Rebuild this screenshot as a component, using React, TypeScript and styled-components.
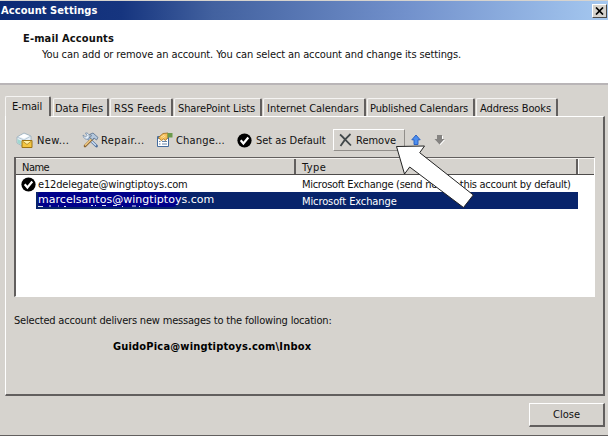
import React from 'react';
import styled, { createGlobalStyle, css } from 'styled-components';

const Global = createGlobalStyle`
  body { margin: 0; background: #fff; overflow: hidden; }
  * { box-sizing: border-box; }
`;

const face = '#d6d3ce';
const dark = '#625f5e';
const navy = '#08246b';

const Dialog = styled.div`
  position: relative;
  display: flex;
  flex-direction: column;
  width: 608px;
  height: 436px;
  padding-top: 1px;
  background: ${face};
  color: #111;
  font: 11px/13px 'DejaVu Sans Condensed', 'DejaVu Sans', sans-serif;
  white-space: nowrap;
`;

const Label = styled.span<{ $track?: number; $bold?: boolean }>`
  display: block;
  letter-spacing: ${(p) => p.$track ?? 0}px;
  font-weight: ${(p) => (p.$bold ? 700 : 400)};
`;

const TitleBar = styled.header`
  display: flex;
  flex: none;
  justify-content: space-between;
  height: 19px;
  padding: 3px 1px 0;
  color: #fff;
  background: linear-gradient(90deg, #0c2a75 0, #16357f 20%, #42619f 35%, #7291cc 67%, #a5c8f0 100%);
`;

const CloseBox = styled.button`
  display: grid;
  place-items: center;
  width: 15px;
  height: 14px;
  padding: 0;
  border: 1px solid;
  border-color: #fff #4c4a48 #4c4a48 #fff;
  background: ${face};
`;

const Banner = styled.section`
  flex: none;
  height: 65px;
  padding: 12px 23px 0;
  background: #fff;
  border-bottom: 2px solid #b9b5b7;
`;

const Description = styled.div`
  padding: 3px 0 0 19px;
`;

const TabStrip = styled.nav`
  display: flex;
  flex: none;
  align-items: flex-end;
  height: 31px;
  padding-left: 5px;
`;

const Tab = styled.div<{ $width: number; $pad: number; $active?: boolean }>`
  width: ${(p) => p.$width}px;
  height: 18px;
  padding: 3px 0 0 ${(p) => p.$pad}px;
  border-top: 1px solid #f5f4f2;
  border-left: 1px solid #f5f4f2;
  border-right: 2px solid ${dark};
  border-radius: 2px 2px 0 0;
  margin-right: 1px;
  ${(p) =>
    p.$active &&
    css`
      height: 20px;
      margin: 0 2px 0 0;
    `}
`;

const Panel = styled.main`
  flex: none;
  width: 600px;
  height: 280px;
  margin-left: 5px;
  padding: 12px 0 0 8px;
  border: 1px solid #fff;
  border-right: 2px solid ${dark};
  border-bottom: 2px solid ${dark};
`;

/* The top edge of the panel is open below the active tab. */
const PanelEdge = styled.div`
  width: 45px;
  height: 1px;
  margin: -13px 0 12px -8px;
  background: ${face};
`;

const Toolbar = styled.div`
  display: grid;
  grid-template-columns: 66px 74px 81px 98px 76px 23px 20px;
  height: 22px;
`;

const Tool = styled.div<{ $gap: number; $raised?: boolean }>`
  display: flex;
  align-items: center;
  gap: ${(p) => p.$gap}px;
  padding-left: 2px;
  ${(p) =>
    p.$raised &&
    css`
      width: 72px;
      padding-left: 5px;
      border: 1px solid;
      border-color: #fff #918e8a #918e8a #fff;
    `}
`;

const Glyph = styled.svg`
  display: block;
  flex: none;
`;

const List = styled.div`
  width: 581px;
  height: 140px;
  margin-top: 6px;
  background: #fff;
  border: solid;
  border-width: 1px 1px 1px 2px;
  border-color: ${dark} #fff #fff ${dark};
`;

const Columns = styled.div`
  display: grid;
  grid-template-columns: 280px 282px 1fr;
  height: 17px;
  background: ${face};
  border-top: 1px solid #f4f2ef;
  border-bottom: 1px solid #4e4b4a;
`;

const Column = styled.div`
  padding: 2px 0 0 6px;
  border-right: 2px solid ${dark};
  &:last-child { border-right: 0; border-left: 1px solid #fff; }
`;

const Row = styled.div<{ $selected?: boolean }>`
  display: grid;
  grid-template-columns: 20px 1fr 276px;
  width: 562px;
  height: 17px;
  ${(p) => p.$selected && css`color: #fff;`}
`;

const Mark = styled.div`
  padding: 2px 0 0 5px;
`;

const Cell = styled.div<{ $fill?: boolean; $indent?: number }>`
  display: flex;
  align-items: flex-start;
  padding: 3px 0 0 ${(p) => p.$indent ?? 0}px;
  background: ${(p) => (p.$fill ? navy : 'transparent')};
`;

const Address = styled.div`
  position: relative;
  width: 142px;
  height: 15px;
  margin-top: -3px;
  border-radius: 3px 3px 8px 5px;
  background: #00008b;
  font-family: 'DejaVu Sans', sans-serif;
  line-height: 15px;
`;

const Specks = styled.svg`
  position: absolute;
  left: 0;
  top: 13px;
`;

const Details = styled.section`
  padding-top: 17px;
`;

const Location = styled.div`
  padding: 13px 0 0 99px;
  color: #000;
`;

const Footer = styled.footer`
  display: flex;
  flex: 1;
  justify-content: flex-end;
  align-items: flex-start;
  padding: 7px 3px 0 0;
  border-bottom: 1px solid ${dark};
`;

const CloseButton = styled.button`
  width: 76px;
  height: 24px;
  padding: 0;
  border: solid;
  border-width: 1px 2px 2px 1px;
  border-color: #fff ${dark} ${dark} #fff;
  background: ${face};
  color: inherit;
  font: inherit;
  text-align: center;
`;

const Pointer = styled.svg`
  position: absolute;
  left: 390px;
  top: 140px;
`;

const CheckIcon = () => (
  <Glyph width="15" height="15" viewBox="0 0 15 15">
    <circle cx="7.5" cy="7.5" r="7.1" fill="#000" />
    <path d="M3.7 7.2l2.7 3.3L11.3 4.5" fill="none" stroke="#fff" strokeWidth="2.2" />
  </Glyph>
);

const NewIcon = () => (
  <Glyph width="17" height="17" viewBox="0 0 17 17">
    <path d="M1 5L8 1l7 3v6l-7 5-7-4z" fill="#e6eff6" stroke="#9aadba" strokeWidth=".8" />
    <path d="M1 5l7 3 7-4M8 8v7" fill="none" stroke="#a9bdca" strokeWidth=".8" />
    <path d="M3 4.500L8 2l5 2-5 2.500z" fill="#fff" />
    <path d="M1.500 7l4 2v4l-4-2z" fill="#9fd7d0" />
    <path d="M6 8.500h10v7H6z" fill="#f3c642" stroke="#9c7312" />
    <path d="M6.500 9l4.500 3.500L15.500 9" fill="#fff0a4" stroke="#aa811f" strokeWidth=".8" />
  </Glyph>
);

const RepairIcon = () => (
  <Glyph width="17" height="16" viewBox="0 0 17 16">
    <path d="M6 6l8.500 8" stroke="#4f6f9c" strokeWidth="2.800" strokeLinecap="round" />
    <path d="M6 6l8 7.500" stroke="#cfe1f5" strokeWidth="1.500" />
    <path d="M1 3l2.500 2L5 3.500 3.500 1C6 .5 8 3 7 6 5 8.500 1.500 7 1 3z" fill="#e6f0fa" stroke="#7089a6" strokeWidth=".8" />
    <path d="M10.500 6.500L3 14" stroke="#8a6432" strokeWidth="2.600" strokeLinecap="round" />
    <path d="M10 6.500L3 13.500" stroke="#f4cd84" strokeWidth="1.400" />
    <path d="M7.500 2.500L11 1l5 4.500-1.500 2.500-2.500-2-1.500 2L8 5.500l1.500-2z" fill="#b4c7dc" stroke="#566e8e" strokeWidth=".8" />
  </Glyph>
);

const ChangeIcon = () => (
  <Glyph width="17" height="16" viewBox="0 0 17 16">
    <path d="M1.500 4.500h11v10h-11z" fill="#fff" stroke="#446c9f" />
    <path d="M2 5h10v2H2z" fill="#6590c6" />
    <path d="M3 9.500h1.500M6 9.500h5M3 12h1.500M6 12h5" stroke="#6685aa" />
    <path d="M2.500 5.500l4.500-4L12 1v4.500L9.500 8.500 7.500 7 5.500 8.500 3.500 7z" fill="#f4bd57" stroke="#9d681d" strokeWidth=".8" />
    <path d="M5 5l3.500-2M6.500 6l3-2" stroke="#ffe3a0" />
    <path d="M11.500 1h5v4.500h-5z" fill="#6c9a4c" />
  </Glyph>
);

const CrossIcon = () => (
  <Glyph width="13" height="14" viewBox="0 0 13 14">
    <path d="M1 1.500C4 4 8 8.500 12 12.500M11.500 1C8 4 4.500 8 1.500 13" fill="none" stroke="#42494b" strokeWidth="1.700" />
  </Glyph>
);

const ArrowIcon = ({ down }: { down?: boolean }) => (
  <Glyph width="11" height="12" viewBox="0 0 11 12">
    {down ? (
      <>
        <path d="M4 2h5v4h2L6.500 11 2 6.500h2z" fill="#fff" />
        <path d="M3 1h5v4h2.500L5.500 10.500.5 5H3z" fill="#858381" />
      </>
    ) : (
      <path d="M5 1l4.200 4.800H7v4.700H3V5.800H.8z" fill="#4c8eef" stroke="#245bc0" strokeWidth=".9" />
    )}
  </Glyph>
);

const tabs = [
  { name: 'E-mail', width: 46, pad: 6, track: -0.17, active: true },
  { name: 'Data Files', width: 56, pad: 1, track: -0.04 },
  { name: 'RSS Feeds', width: 63, pad: 3, track: 0.1 },
  { name: 'SharePoint Lists', width: 88, pad: 3, track: -0.1 },
  { name: 'Internet Calendars', width: 103, pad: 3, track: -0.03 },
  { name: 'Published Calendars', width: 108, pad: 2, track: -0.12 },
  { name: 'Address Books', width: 82, pad: 3, track: -0.1 },
];

export default function App() {
  return (
    <>
      <Global />
      <Dialog>
        <TitleBar>
          <Label $bold $track={0.08}>Account Settings</Label>
          <CloseBox aria-label="Close window">
            <Glyph width="9" height="8" viewBox="0 0 9 8">
              <path d="M1 .5l7 7M8 .5l-7 7" stroke="#000" strokeWidth="1.700" />
            </Glyph>
          </CloseBox>
        </TitleBar>
        <Banner>
          <Label $bold $track={0.13}>E-mail Accounts</Label>
          <Description>
            <Label $track={-0.11}>
              You can add or remove an account. You can select an account and change its settings.
            </Label>
          </Description>
        </Banner>
        <TabStrip>
          {tabs.map((t) => (
            <Tab key={t.name} $width={t.width} $pad={t.pad} $active={t.active}>
              <Label $track={t.track}>{t.name}</Label>
            </Tab>
          ))}
        </TabStrip>
        <Panel>
          <PanelEdge />
          <Toolbar>
            <Tool $gap={4}><NewIcon /><Label $track={0.4}>New...</Label></Tool>
            <Tool $gap={2}><RepairIcon /><Label $track={0.4}>Repair...</Label></Tool>
            <Tool $gap={3}><ChangeIcon /><Label $track={0.17}>Change...</Label></Tool>
            <Tool $gap={4}><CheckIcon /><Label $track={-0.03}>Set as Default</Label></Tool>
            <Tool $gap={4} $raised><CrossIcon /><Label>Remove</Label></Tool>
            <Tool $gap={0}><ArrowIcon /></Tool>
            <Tool $gap={0}><ArrowIcon down /></Tool>
          </Toolbar>
          <List>
            <Columns>
              <Column><Label $track={-0.5}>Name</Label></Column>
              <Column><Label $track={0.4}>Type</Label></Column>
              <Column />
            </Columns>
            <Row>
              <Mark><CheckIcon /></Mark>
              <Cell $indent={2}><Label $track={-0.15}>e12delegate@wingtiptoys.com</Label></Cell>
              <Cell><Label $track={-0.29}>Microsoft Exchange (send new to this account by default)</Label></Cell>
            </Row>
            <Row $selected>
              <Mark />
              <Cell $fill $indent={2}>
                <Address>
                  <Label $track={0.03}>marcelsantos@wingtiptoys.com</Label>
                  <Specks width="142" height="3" viewBox="0 0 142 3">
                    <path d="M0 1.500h5M11 1h2M20 1h1M26 1.500h2M53 .5h2M57 .5h1M64 .5h4M75 .5h4M84 1.500h1M94 1h4M101 1.500h1" stroke="#dfe4f3" />
                  </Specks>
                </Address>
              </Cell>
              <Cell $fill><Label $track={-0.1}>Microsoft Exchange</Label></Cell>
            </Row>
          </List>
          <Details>
            <Label $track={-0.19}>Selected account delivers new messages to the following location:</Label>
            <Location>
              <Label $bold $track={0.18}>GuidoPica@wingtiptoys.com\Inbox</Label>
            </Location>
          </Details>
        </Panel>
        <Footer>
          <CloseButton><Label $track={0}>Close</Label></CloseButton>
        </Footer>
        <Pointer width="90" height="75" viewBox="390 140 90 75">
          <path d="M396.500 146.500L424.500 146L419.700 152.700L473.300 195L463.500 207.500L409.700 167L404.500 174Z" fill="#fff" stroke="#222" />
        </Pointer>
      </Dialog>
    </>
  );
}
